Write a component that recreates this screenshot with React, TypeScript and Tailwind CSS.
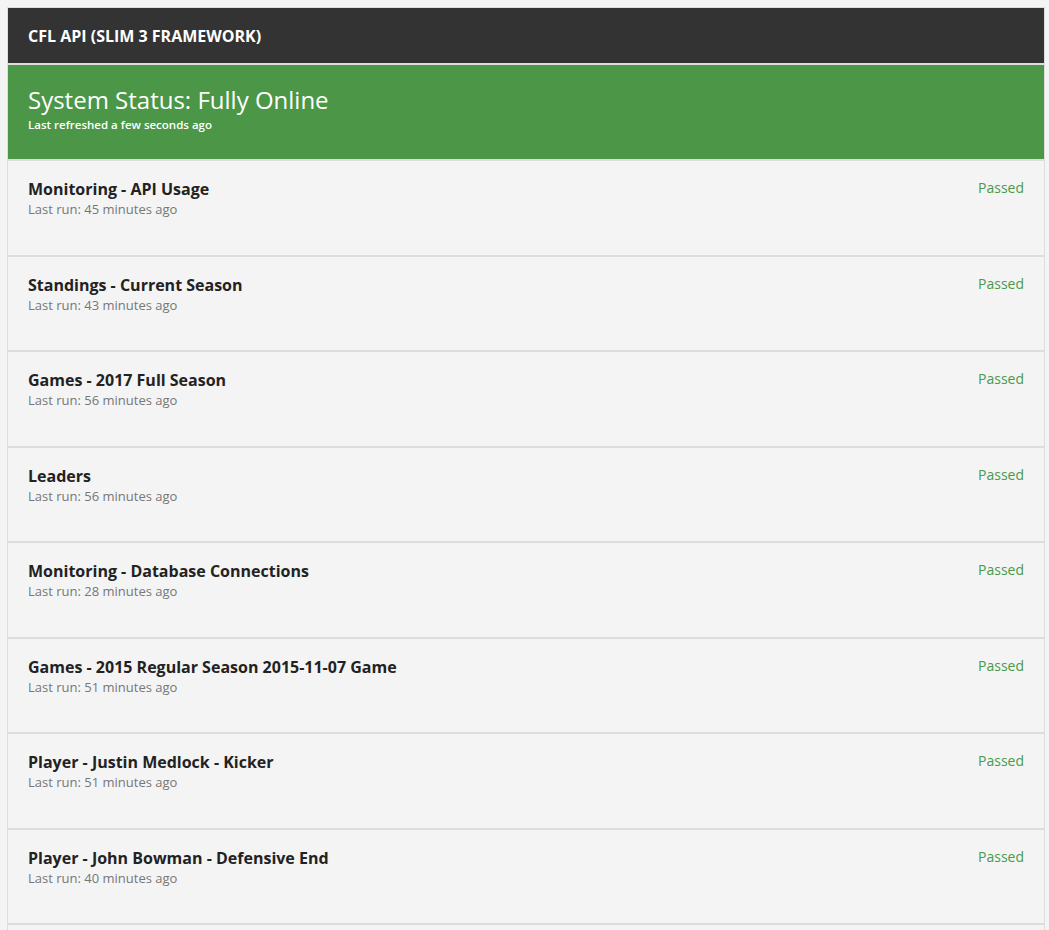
const checks = [
  { name: "Monitoring - API Usage", ago: "45 minutes ago" },
  { name: "Standings - Current Season", ago: "43 minutes ago" },
  { name: "Games - 2017 Full Season", ago: "56 minutes ago" },
  { name: "Leaders", ago: "56 minutes ago" },
  { name: "Monitoring - Database Connections", ago: "28 minutes ago" },
  { name: "Games - 2015 Regular Season 2015-11-07 Game", ago: "51 minutes ago" },
  { name: "Player - Justin Medlock - Kicker", ago: "51 minutes ago" },
  { name: "Player - John Bowman - Defensive End", ago: "40 minutes ago" },
];

export default function App() {
  return (
    <div
      className="h-[930px] bg-[#f4f4f4] pt-[7px] pl-[7px] overflow-hidden"
      style={{ fontFamily: '"Open Sans", sans-serif' }}
    >
      <div className="w-[1038px] border border-[#dddddd] border-b-0">
        {/* Top bar */}
        <div className="h-[55px] bg-[#333333] px-5 flex items-center">
          <h1 className="text-[16px] font-bold uppercase text-white">CFL API (Slim 3 Framework)</h1>
        </div>

        {/* Overall status */}
        <div className="border-t-2 border-[#dddddd] bg-[#4b9647] h-[96px] px-5 pt-[19px] text-white">
          <div className="text-[24px] leading-[32px]">System Status: Fully Online</div>
          <div className="mt-px text-[11.5px] font-semibold leading-[16px]">Last refreshed a few seconds ago</div>
        </div>

        {/* Checks */}
        {checks.map((c) => (
          <div
            key={c.name}
            className="border-t-2 border-[#dddddd] h-[95.5px] px-5 pt-[16px] flex justify-between"
          >
            <div>
              <div className="text-[16px] font-bold leading-[24px] text-[#222222]">{c.name}</div>
              <div className="text-[13px] leading-[16px] text-[#777777]">Last run: {c.ago}</div>
            </div>
            <div className="text-[14px] leading-[22px] text-[#4a9a4a]">Passed</div>
          </div>
        ))}
        <div className="border-t-2 border-[#dddddd] h-[20px]" />
      </div>
    </div>
  );
}
